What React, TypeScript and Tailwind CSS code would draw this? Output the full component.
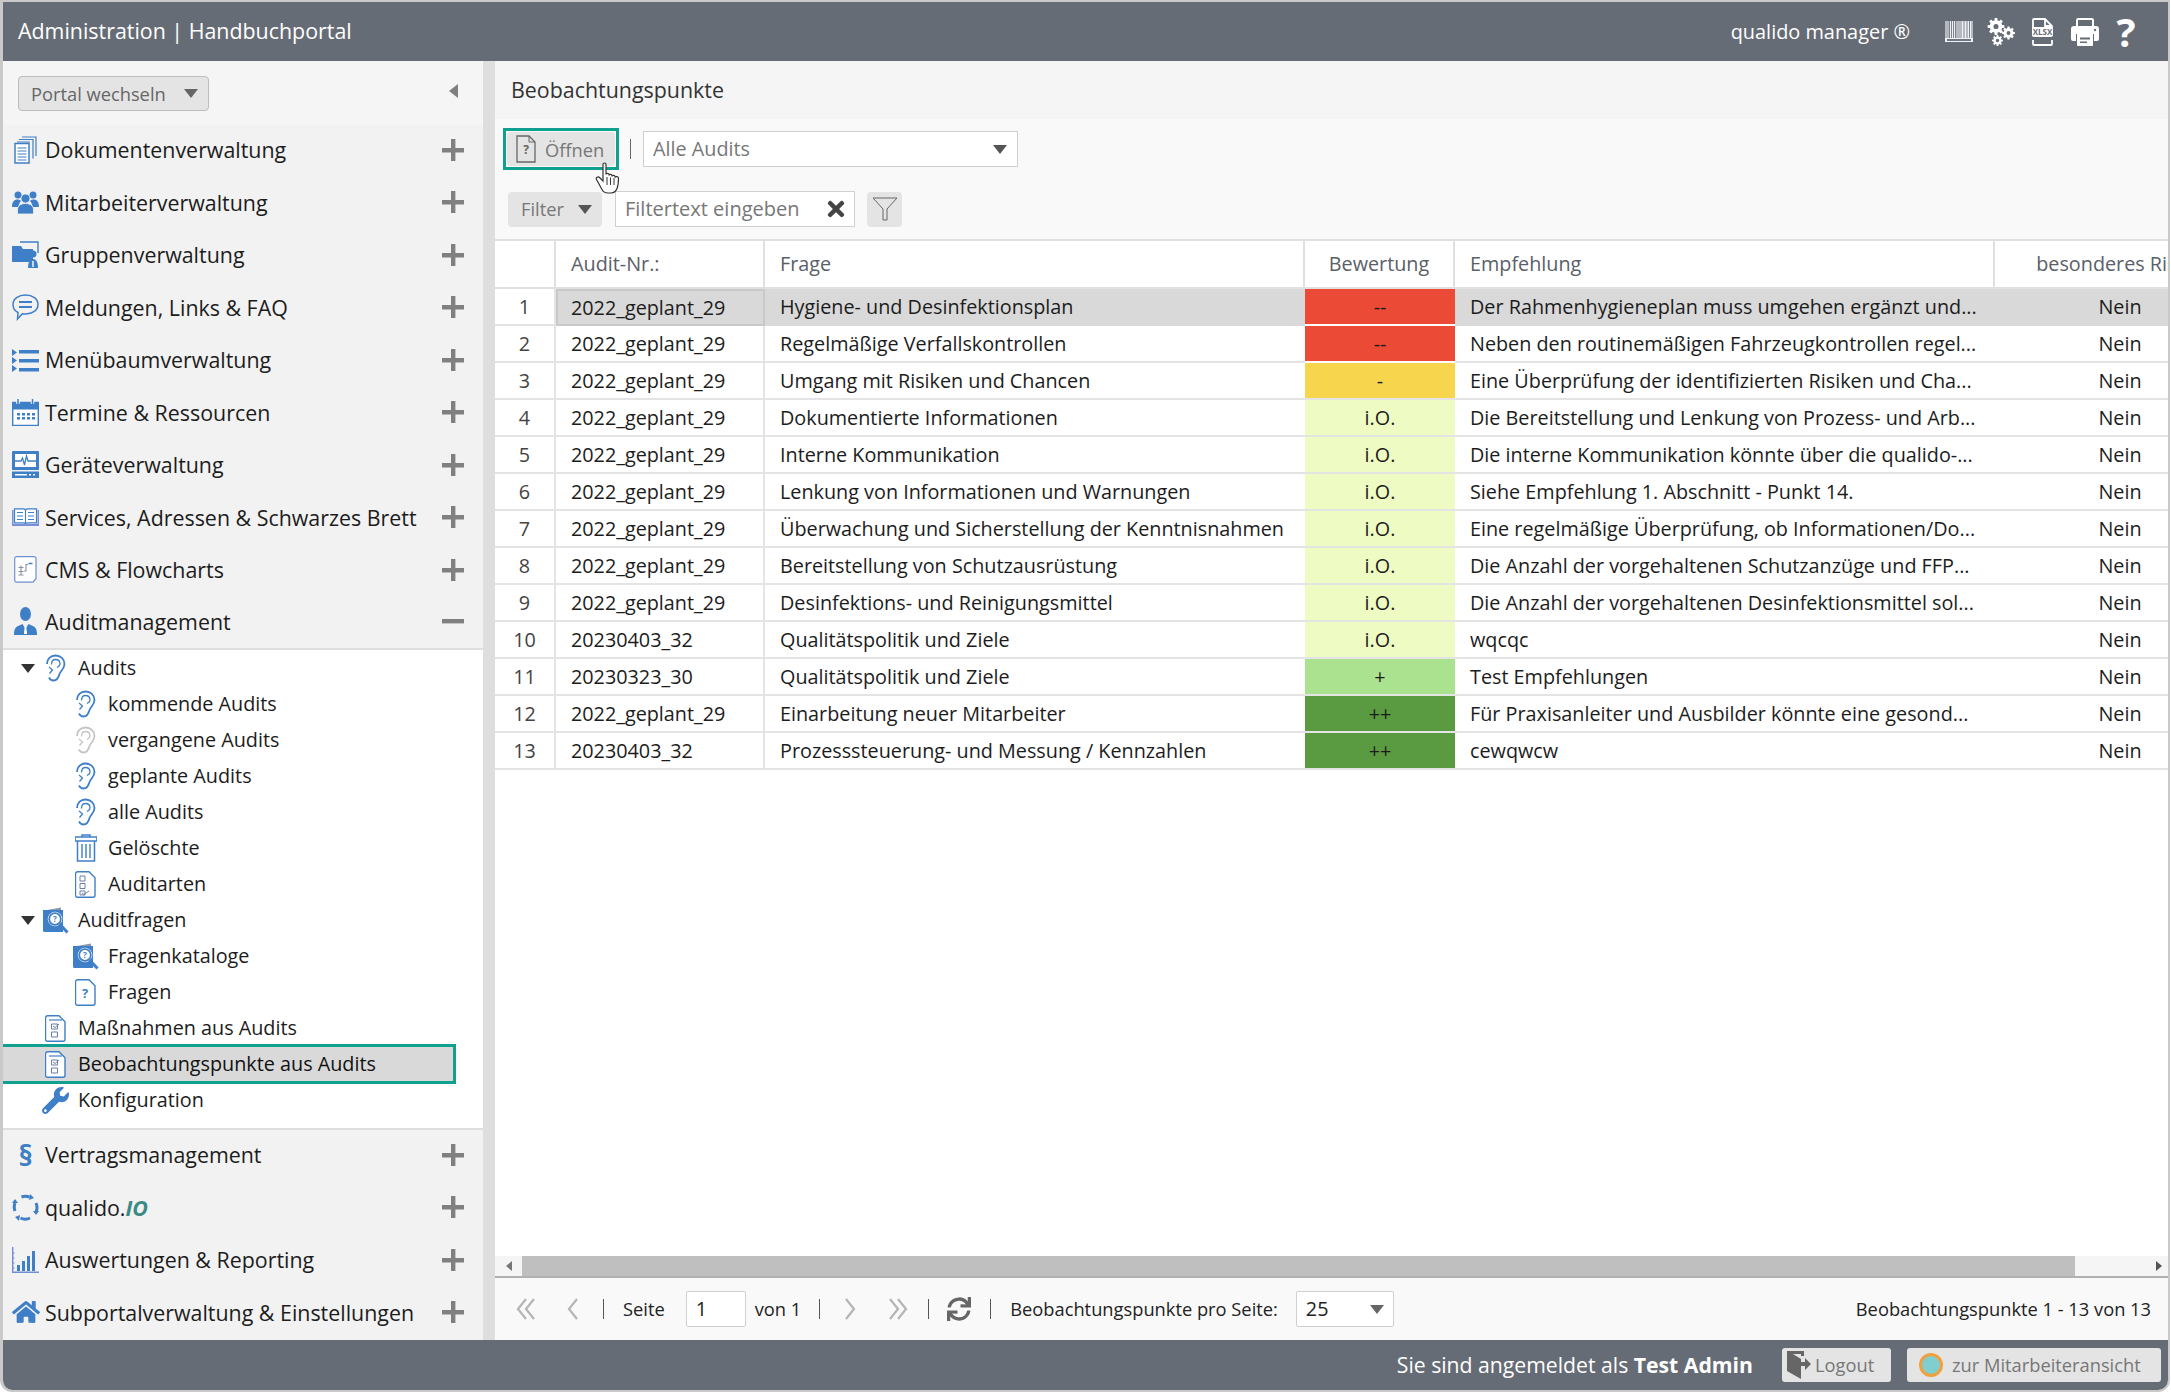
import React from "react";
import { FaHome, FaWrench, FaSync, FaTimes } from "react-icons/fa";

const BLUE = "#3f7fc7";

const Svg = ({ w, h, vb, children, className = "" }: { w: number; h: number; vb: string; children: React.ReactNode; className?: string }) => (
  <svg width={w} height={h} viewBox={vb} className={"shrink-0 " + className} fill="none">{children}</svg>
);

const Caret = ({ w = 14, h = 9, c = "#333" }: { w?: number; h?: number; c?: string }) => (
  <Svg w={w} h={h} vb="0 0 14 9"><path d="M0 0H14L7 9Z" fill={c} /></Svg>
);

const PlusIcon = () => (
  <Svg w={22} h={22} vb="0 0 22 22"><path d="M9 0h4.400v9H22v4.400h-8.600V22H9v-8.600H0V9h9Z" fill="#808080" /></Svg>
);
const MinusIcon = () => (
  <Svg w={22} h={22} vb="0 0 22 22"><rect y="9" width="22" height="4.400" fill="#808080" /></Svg>
);

const Ear = ({ c = BLUE }: { c?: string }) => (
  <Svg w={21} h={28} vb="0 0 21 28">
    <path d="M2 10C2 5 5.500 1.500 10.500 1.500 15.500 1.500 19.500 5 19.500 10 19.500 14.500 16 16.500 14.500 20 13.500 24 11.500 26.500 8.500 26.500 6.500 26.500 5 25.500 4 23.500" stroke={c} strokeWidth="1.800" />
    <path d="M6.500 10.500C6.500 7.500 8 5.500 10.500 5.500 13.500 5.500 15 7.500 15 10 15 12 13.500 12.500 12 13.500M4 13l3.500 3-3 3.500" stroke={c} strokeWidth="1.300" />
  </Svg>
);
const DocStack = () => (
  <Svg w={23} h={28} vb="0 0 23 28">
    <path d="M8 1h14v19M5 3.500h14v19M3 6h13" stroke={BLUE} strokeWidth="1.200" />
    <path d="M1 7.500h14v19.500H1Z" fill="#fff" stroke={BLUE} strokeWidth="1.500" />
    <path d="M3.500 12h9M3.500 15h9M3.500 18h9M3.500 21h9M3.500 24h9" stroke={BLUE} strokeWidth="1.200" />
  </Svg>
);
const People = () => (
  <Svg w={27} h={23} vb="0 0 27 23">
    <circle cx="6" cy="4" r="3.500" fill={BLUE} />
    <circle cx="21" cy="4" r="3.500" fill={BLUE} />
    <path d="M0 16c0-5 2-7.500 5.500-7.500 1.500 0 2.500.500 3.500 1.500-1.500 1.500-2.500 3.500-2.500 6Z" fill={BLUE} />
    <path d="M27 16c0-5-2-7.500-5.500-7.500-1.500 0-2.500.500-3.500 1.500 1.500 1.500 2.500 3.500 2.500 6Z" fill={BLUE} />
    <circle cx="13.500" cy="7.500" r="4.500" fill={BLUE} stroke="#f2f2f2" strokeWidth=".8" />
    <path d="M5.500 23v-4c0-4 3-6.500 8-6.500s8 2.500 8 6.500v4Z" fill={BLUE} stroke="#f2f2f2" strokeWidth=".8" />
  </Svg>
);
const FolderPerson = () => (
  <Svg w={27} h={28} vb="0 0 27 28">
    <path d="M0 5h9l2 3h10v13H0Z" fill={BLUE} />
    <path d="M8 1h18v11" stroke={BLUE} strokeWidth="1.400" />
    <circle cx="21" cy="13" r="3.500" fill={BLUE} />
    <path d="M16 27c0-6 2-9 5-9s5 3 5 9Z" fill={BLUE} />
    <path d="M20.300 20h1.400v6h-1.400Z" fill="#fff" />
  </Svg>
);
const Chat = () => (
  <Svg w={27} h={28} vb="0 0 27 28">
    <path d="M13.500 2C20.500 2 26 5.800 26 11.500S20.500 21 13.500 21c-1 0-2 0-3-.300L5.500 26l.500-6.500C3 18 1 15 1 11.500 1 5.800 6.500 2 13.500 2Z" stroke={BLUE} strokeWidth="1.500" />
    <path d="M7 9h13M7 14h13" stroke={BLUE} strokeWidth="1.800" />
  </Svg>
);
const ListIc = () => (
  <Svg w={27} h={24} vb="0 0 27 24">
    <path d="M0 1l5 3.500L0 8ZM0 9l5 3.500L0 16ZM0 17l5 3.500L0 24Z" fill={BLUE} />
    <path d="M7 2h20v3.500H7ZM7 11h20v3.500H7ZM7 20h20v3.500H7Z" fill={BLUE} />
  </Svg>
);
const Cal = () => (
  <Svg w={27} h={27} vb="0 0 27 27">
    <path d="M.7 3.500h25.600v23H.7Z" fill="#fff" stroke={BLUE} strokeWidth="1.400" />
    <path d="M0 3h27v7.500H0Z" fill={BLUE} />
    <path d="M6 0v5M20.500 0v5" stroke="#fff" strokeWidth="3.400" />
    <path d="M6 0v5M20.500 0v5" stroke={BLUE} strokeWidth="1.600" />
    <path d="M5 14h3v2.500H5ZM10 14h3v2.500h-3ZM15 14h3v2.500h-3ZM20 14h3v2.500h-3ZM5 18h3v2.500H5ZM10 18h3v2.500h-3ZM15 18h3v2.500h-3ZM20 18h3v2.500h-3Z" fill={BLUE} />
  </Svg>
);
const Monitor = () => (
  <Svg w={27} h={27} vb="0 0 27 27">
    <path d="M0 1a1 1 0 011-1h25a1 1 0 011 1v18H0Z" fill={BLUE} />
    <path d="M3 3h21v13H3Z" fill="#fff" />
    <path d="M3 10h6l1.500-3 2 7 2-9 1.500 5h8" stroke={BLUE} strokeWidth="1.300" />
    <path d="M0 20.500h27V27H0Z" fill={BLUE} />
    <path d="M3 23h12v1.500H3ZM17 23h2v1.500h-2ZM21 23h2v1.500h-2Z" fill="#fff" />
  </Svg>
);
const Book = () => (
  <Svg w={27} h={18} vb="0 0 27 18">
    <path d="M0 2h1.500v14H13l.5 1 .5-1h11.500V2H27v16H0Z" fill="#7c8fd6" />
    <path d="M2.500 .8h9c1 0 1.500.5 2 1.200.500-.700 1-1.200 2-1.200h9v14h-9.500l-1.500 1-1.500-1H2.500Z" fill="#fff" stroke={BLUE} strokeWidth="1.200" />
    <path d="M13.500 2v13M5 4.500h6M5 8h6M5 11.500h6M16 4.500h6M16 8h6M16 11.500h6" stroke={BLUE} strokeWidth="1.100" />
  </Svg>
);
const FlowDoc = () => (
  <Svg w={23} h={27} vb="0 0 23 27">
    <path d="M2.500.7h17.500a2 2 0 012 2v20l-3 3.500H2.500a2 2 0 01-1.800-2V2.500A2 2 0 012.500.7Z" fill="#fff" stroke="#6f8ed4" strokeWidth="1.200" />
    <path d="M4.500 11.500h5M4.500 15.500h5M4.500 19h5M7 9.500v9M10 15h2V8.500h2" stroke="#8a8fa8" strokeWidth="1.100" />
    <path d="M14.500 7.500h4" stroke={BLUE} strokeWidth="1.500" />
  </Svg>
);
const Suit = () => (
  <Svg w={23} h={28} vb="0 0 23 28">
    <ellipse cx="11.500" cy="7" rx="5.500" ry="7" fill={BLUE} />
    <path d="M0 28c0-4 .5-7 3-8.500l5.500-2.500 3 5 3-5 5.500 2.500c2.500 1.500 3 4.500 3 8.500Z" fill={BLUE} />
    <path d="M10.700 20h1.600l.8 7h-3.200Z" fill="#fff" />
  </Svg>
);
const CheckDoc = ({ variant }: { variant: "a" | "b" | "c" }) => (
  <Svg w={21} h={27} vb="0 0 21 27" >
    <path d="M2.500.8h11.500l6 6v17.500a2 2 0 01-2 2H2.500a2 2 0 01-2-2V2.800a2 2 0 012-2Z" fill="#fff" stroke={BLUE} strokeWidth="1.400" />
    {variant === "a" && (
      <>
        <path d="M5 5h5v5H5ZM5 12.500h5v5H5ZM5 20h5v4H5Z" stroke="#6b7fa8" strokeWidth="1" />
        <path d="M7 22l2 1.500 5-3.500" stroke="#6b7fa8" strokeWidth="1" />
      </>
    )}
    {variant === "b" && (
      <>
        <path d="M4 5h13" stroke={BLUE} strokeWidth="1.200" />
        <path d="M6.500 9h6v5h-6ZM6.500 17h6v5h-6Z" stroke="#6b7fa8" strokeWidth="1" />
        <path d="M8 11l2 1.500 4-3.500" stroke="#6b7fa8" strokeWidth="1" />
      </>
    )}
    {variant === "c" && <text x="10" y="19" textAnchor="middle" fontSize="13" fontWeight="700" fill={BLUE} fontFamily="Open Sans">?</text>}
  </Svg>
);
const Trash = () => (
  <Svg w={22} h={28} vb="0 0 22 28">
    <path d="M7 3V1h8v2" stroke={BLUE} strokeWidth="1.500" />
    <path d="M0 3h22v4H0Z" stroke={BLUE} strokeWidth="1.600" />
    <path d="M2.500 7v20h17V7" stroke={BLUE} strokeWidth="1.500" />
    <path d="M7 10v14M11 10v14M15 10v14" stroke={BLUE} strokeWidth="1.400" />
  </Svg>
);
const BookSearch = () => (
  <Svg w={26} h={27} vb="0 0 26 27">
    <path d="M1 3.500 18 .5V3H1Z" fill="#8d97b4" />
    <path d="M0 3h20v22H1.500A1.500 1.500 0 010 23.500Z" fill={BLUE} />
    <circle cx="12" cy="12" r="6.800" fill="#fff" stroke="#fff" />
    <circle cx="12" cy="12" r="5.800" stroke={BLUE} strokeWidth="1.800" />
    <path d="M16.500 17l8 8.500" stroke={BLUE} strokeWidth="3" />
    <text x="12" y="15" textAnchor="middle" fontSize="8" fontWeight="700" fill={BLUE} fontFamily="Open Sans">?</text>
  </Svg>
);
const Cycle = () => (
  <Svg w={27} h={27} vb="0 0 27 27">
    <path d="M3 17A11 11 0 013 9M9.500 3A11 11 0 0117.500 3M24 9a11 11 0 010 9M18 24a11 11 0 01-9.500 0" stroke={BLUE} strokeWidth="3" />
    <path d="M0 9h6L3 5ZM18 0l-1 6 5-2ZM27 17h-6l3 4ZM7 27l1-6-5 2Z" fill={BLUE} />
  </Svg>
);
const Bars = () => (
  <Svg w={27} h={26} vb="0 0 27 26">
    <path d="M.7 0v25.300H27" stroke="#6f8ed4" strokeWidth="1.400" />
    <path d="M0 6h2.500M0 11h2.500M0 16h2.500M0 21h2.500" stroke="#6f8ed4" strokeWidth="1" />
    <path d="M5 18h3v6H5ZM10 14h3v10h-3ZM15 9h3v15h-3ZM20 4h3v20h-3Z" fill={BLUE} />
  </Svg>
);
const Barcode = () => (
  <Svg w={28} h={21} vb="0 0 28 21">
    <path d="M0 0h28v21H0Z" fill="#eef1f5" />
    <path d="M1 0v17M3 0v17M4.500 0v17M6.500 0v17M8.500 0v17M10.500 0v17M12 0v17M14 0v17M16 0v17M19 0v17M22 0v17M24.500 0v17M27 0v17" stroke="#70767f" strokeWidth=".9" />
    <path d="M2 18h24v2H2Z" fill="#70767f" />
  </Svg>
);
const gearPath = (cx: number, cy: number, r: number, teeth: number) => {
  const inner = r * 0.74;
  const step = (Math.PI * 2) / teeth;
  let d = "";
  for (let i = 0; i < teeth; i++) {
    const a = i * step;
    const pts: [number, number][] = [
      [inner, a - step * 0.32],
      [r, a - step * 0.2],
      [r, a + step * 0.2],
      [inner, a + step * 0.32],
    ];
    for (const [rad, ang] of pts) {
      d += (d ? "L" : "M") + (cx + rad * Math.cos(ang)).toFixed(2) + " " + (cy + rad * Math.sin(ang)).toFixed(2);
    }
  }
  return d + "Z";
};
const Gear = ({ cx, cy, r, teeth }: { cx: number; cy: number; r: number; teeth: number }) => (
  <>
    <path d={gearPath(cx, cy, r, teeth)} fill="#fff" />
    <circle cx={cx} cy={cy} r={r * 0.3} fill="#666c75" />
  </>
);
const Gears = () => (
  <Svg w={28} h={28} vb="0 0 28 28">
    <Gear cx={9} cy={8.500} r={8.500} teeth={8} />
    <Gear cx={21.500} cy={15} r={6.500} teeth={8} />
    <Gear cx={10.500} cy={22.500} r={5.500} teeth={8} />
  </Svg>
);
const Printer = () => (
  <Svg w={28} h={28} vb="0 0 28 28">
    <path d="M6 9V2.200A1.200 1.200 0 017.200 1h13.600A1.200 1.200 0 0122 2.200V9" stroke="#fff" strokeWidth="2" />
    <path d="M3 8h22a3 3 0 013 3v10a2 2 0 01-2 2h-3V16H5v7H2a2 2 0 01-2-2V11a3 3 0 013-3Z" fill="#fff" />
    <path d="M6 16h16v11a1 1 0 01-1 1H7a1 1 0 01-1-1Z" fill="#fff" />
    <path d="M9 19.500h10v2H9ZM9 23.500h7v1.500H9Z" fill="#666c75" />
    <circle cx="24" cy="12" r="1.200" fill="#666c75" />
  </Svg>
);
const XlsxIc = () => (
  <span className="relative flex h-[28px] w-[25px] shrink-0 items-center justify-center">
    <Svg w={21} h={28} vb="0 0 21 28" className="absolute left-[2px] top-0">
      <path d="M1 18V2a1 1 0 011-1h11l7 7v10M1 22v4a1 1 0 001 1h17a1 1 0 001-1v-4M13 1v7h7" stroke="#fff" strokeWidth="1.800" />
    </Svg>
    <span className="relative z-10 rounded-[2px] bg-white px-[1px] text-[8px] font-bold leading-[10px] text-[#666c75]">XLSX</span>
  </span>
);
const DoorOut = () => (
  <Svg w={25} h={28} vb="0 0 25 28">
    <path d="M0 0h17v5h-3V3H6l8 5v20L0 20Z" fill="#666" />
    <path d="M14 11h4V7l6 6-6 6v-4h-4Z" fill="#666" />
  </Svg>
);

const Sec = () => <span className="flex h-[28px] w-[27px] items-center justify-center text-[29px] font-bold leading-none text-[#3f7fc7]">§</span>;

type Acc = { icon: React.ReactNode; label: React.ReactNode; open?: boolean };

const top: Acc[] = [
  { icon: <DocStack />, label: "Dokumentenverwaltung" },
  { icon: <People />, label: "Mitarbeiterverwaltung" },
  { icon: <FolderPerson />, label: "Gruppenverwaltung" },
  { icon: <Chat />, label: "Meldungen, Links & FAQ" },
  { icon: <ListIc />, label: "Menübaumverwaltung" },
  { icon: <Cal />, label: "Termine & Ressourcen" },
  { icon: <Monitor />, label: "Geräteverwaltung" },
  { icon: <Book />, label: "Services, Adressen & Schwarzes Brett" },
  { icon: <FlowDoc />, label: "CMS & Flowcharts" },
  { icon: <Suit />, label: "Auditmanagement", open: true },
];
const bottom: Acc[] = [
  { icon: <Sec />, label: "Vertragsmanagement" },
  { icon: <Cycle />, label: <>qualido.<span className="font-bold italic text-[#3b8a84]">IO</span></> },
  { icon: <Bars />, label: "Auswertungen & Reporting" },
  { icon: <FaHome size={28} color={BLUE} />, label: "Subportalverwaltung & Einstellungen" },
];

const AccRow = ({ a }: { a: Acc }) => (
  <div className={"box-border flex h-[52.5px] shrink-0 items-center bg-[#f2f2f2] pb-[3px] pr-[19px] " + (a.open ? "border-b-2 border-[#dedede]" : "")}>
    <span className="flex w-[42px] shrink-0 items-center justify-center pl-[3px]">{a.icon}</span>
    <span className="flex-1 whitespace-nowrap text-[21.4px] leading-none text-[#1c1c1c]">{a.label}</span>
    {a.open ? <MinusIcon /> : <PlusIcon />}
  </div>
);

const TreeRow = ({ level, caret, icon, label }: { level: 1 | 2; caret?: boolean; icon: React.ReactNode; label: string }) => (
  <div className="flex h-[36px] shrink-0 items-center">
    <span className="flex w-[42px] shrink-0 items-center justify-center pl-[8px]">{caret && <Caret />}</span>
    {level === 2 && <span className="w-[30px] shrink-0" />}
    <span className="-ml-[3px] flex w-[27px] shrink-0 items-center justify-center">{icon}</span>
    <span className="ml-[9px] whitespace-nowrap text-[19.8px] text-[#1c1c1c]">{label}</span>
  </div>
);

const Sidebar = () => (
  <aside className="flex w-[480px] shrink-0 flex-col bg-[#f5f5f5]">
    <div className="flex h-[64px] shrink-0 items-start justify-between pl-[15px] pr-[25px] pt-[15px]">
      <div className="flex h-[35px] w-[191px] items-center justify-between rounded-[4px] border border-[#bdbdbd] bg-[#e4e4e4] pl-[12px] pr-[10px] text-[18.3px] text-[#666]">
        Portal wechseln <Caret c="#666" />
      </div>
      <Svg w={9} h={14} vb="0 0 9 14" className="mt-[8px]"><path d="M9 0v14L0 7Z" fill="#808080" /></Svg>
    </div>
    {top.map((a, i) => <AccRow key={i} a={a} />)}
    <div className="flex h-[478px] shrink-0 flex-col bg-white">
      <TreeRow level={1} caret icon={<Ear />} label="Audits" />
      <TreeRow level={2} icon={<Ear />} label="kommende Audits" />
      <TreeRow level={2} icon={<Ear c="#c4c4c4" />} label="vergangene Audits" />
      <TreeRow level={2} icon={<Ear />} label="geplante Audits" />
      <TreeRow level={2} icon={<Ear />} label="alle Audits" />
      <TreeRow level={2} icon={<Trash />} label="Gelöschte" />
      <TreeRow level={2} icon={<CheckDoc variant="a" />} label="Auditarten" />
      <TreeRow level={1} caret icon={<BookSearch />} label="Auditfragen" />
      <TreeRow level={2} icon={<BookSearch />} label="Fragenkataloge" />
      <TreeRow level={2} icon={<CheckDoc variant="c" />} label="Fragen" />
      <TreeRow level={1} icon={<CheckDoc variant="b" />} label="Maßnahmen aus Audits" />
      <div className="relative z-10 -mb-[2px] -ml-[3px] -mt-[2px] box-border flex h-[40px] w-[456px] shrink-0 items-center border-[3px] border-[#10a08f] bg-[#d9d9d9] pl-[39px]">
        <span className="flex w-[27px] shrink-0 items-center justify-center"><CheckDoc variant="b" /></span>
        <span className="ml-[9px] whitespace-nowrap text-[19.8px] text-[#111]">Beobachtungspunkte aus Audits</span>
      </div>
      <TreeRow level={1} icon={<FaWrench size={27} color={BLUE} />} label="Konfiguration" />
    </div>
    <div className="shrink-0 border-t-2 border-[#dedede]">
      {bottom.map((a, i) => <AccRow key={i} a={a} />)}
    </div>
  </aside>
);

const rows: [string, string, string, string][] = [
  ["2022_geplant_29", "Hygiene- und Desinfektionsplan", "--", "Der Rahmenhygieneplan muss umgehen ergänzt und..."],
  ["2022_geplant_29", "Regelmäßige Verfallskontrollen", "--", "Neben den routinemäßigen Fahrzeugkontrollen regel..."],
  ["2022_geplant_29", "Umgang mit Risiken und Chancen", "-", "Eine Überprüfung der identifizierten Risiken und Cha..."],
  ["2022_geplant_29", "Dokumentierte Informationen", "i.O.", "Die Bereitstellung und Lenkung von Prozess- und Arb..."],
  ["2022_geplant_29", "Interne Kommunikation", "i.O.", "Die interne Kommunikation könnte über die qualido-..."],
  ["2022_geplant_29", "Lenkung von Informationen und Warnungen", "i.O.", "Siehe Empfehlung 1. Abschnitt - Punkt 14."],
  ["2022_geplant_29", "Überwachung und Sicherstellung der Kenntnisnahmen", "i.O.", "Eine regelmäßige Überprüfung, ob Informationen/Do..."],
  ["2022_geplant_29", "Bereitstellung von Schutzausrüstung", "i.O.", "Die Anzahl der vorgehaltenen Schutzanzüge und FFP..."],
  ["2022_geplant_29", "Desinfektions- und Reinigungsmittel", "i.O.", "Die Anzahl der vorgehaltenen Desinfektionsmittel sol..."],
  ["20230403_32", "Qualitätspolitik und Ziele", "i.O.", "wqcqc"],
  ["20230323_30", "Qualitätspolitik und Ziele", "+", "Test Empfehlungen"],
  ["2022_geplant_29", "Einarbeitung neuer Mitarbeiter", "++", "Für Praxisanleiter und Ausbilder könnte eine gesond..."],
  ["20230403_32", "Prozesssteuerung- und Messung / Kennzahlen", "++", "cewqwcw"],
];
const rating: Record<string, string> = {
  "--": "bg-[#eb4a36] border-white",
  "-": "bg-[#f7d64e] border-[#e4e4e4]",
  "i.O.": "bg-[#eefbc2] border-[#e4e4e4]",
  "+": "bg-[#abe290] border-[#e4e4e4]",
  "++": "bg-[#5a9a41] border-[#e4e4e4]",
};
const th = "border-r-2 border-t-2 border-b-2 border-[#e0e0e0] font-normal text-[#5a6068] text-[19.8px]";

const DataTable = () => (
  <div className="min-h-0 flex-1 overflow-hidden bg-white">
    <table className="w-[1750px] table-fixed border-separate border-spacing-0 text-[19.8px] text-[#1c1c1c]">
      <colgroup>
        <col className="w-[61px]" />
        <col className="w-[209px]" />
        <col className="w-[540px]" />
        <col className="w-[150px]" />
        <col className="w-[540px]" />
        <col className="w-[250px]" />
      </colgroup>
      <thead>
        <tr className="h-[50px]">
          <th className={th}></th>
          <th className={th + " pl-[15px] text-left"}>Audit-Nr.:</th>
          <th className={th + " pl-[15px] text-left"}>Frage</th>
          <th className={th + " text-center"}>Bewertung</th>
          <th className={th + " pl-[15px] text-left"}>Empfehlung</th>
          <th className="border-b-2 border-t-2 border-[#e0e0e0] text-center text-[19.8px] font-normal text-[#5a6068]">besonderes Risiko</th>
        </tr>
      </thead>
      <tbody>
        {rows.map((r, i) => {
          const sel = i === 0;
          const bg = sel ? "bg-[#d9d9d9]" : "";
          return (
            <tr key={i} className="h-[37px]">
              <td className="border-b-2 border-r-2 border-[#e4e4e4] bg-white text-center text-[#444]">{i + 1}</td>
              <td className={"whitespace-nowrap " + (sel ? "border-2 border-[#c9c9c9] bg-[#d9d9d9] pl-[13px]" : "border-b-2 border-r-2 border-[#e4e4e4] pl-[15px]")}>{r[0]}</td>
              <td className={"whitespace-nowrap border-b-2 pl-[15px] " + bg + (sel ? " border-[#d9d9d9]" : " border-[#e4e4e4]")}>{r[1]}</td>
              <td className={"border-b-2 text-center " + rating[r[2]]}>{r[2]}</td>
              <td className={"whitespace-nowrap border-b-2 pl-[15px] " + bg + (sel ? " border-[#d9d9d9]" : " border-[#e4e4e4]")}>{r[3]}</td>
              <td className={"whitespace-nowrap border-b-2 text-center " + bg + (sel ? " border-[#d9d9d9]" : " border-[#e4e4e4]")}>Nein</td>
            </tr>
          );
        })}
      </tbody>
    </table>
  </div>
);

const Sep = () => <span className="block h-[20px] w-px shrink-0 bg-[#555]" />;
const Chev = ({ d }: { d: string }) => (
  <Svg w={16} h={22} vb="0 0 16 22"><path d={d} stroke="#b5b5b5" strokeWidth="2.200" /></Svg>
);
const Chev2 = ({ d }: { d: string }) => (
  <Svg w={22} h={22} vb="0 0 22 22"><path d={d} stroke="#b5b5b5" strokeWidth="2.200" /></Svg>
);

const Pager = () => (
  <div className="flex h-[62px] shrink-0 items-center bg-[#f9f9f9] pr-[17px] text-[18.3px] text-[#222]">
    <span className="ml-[20px]"><Chev2 d="M11 1L3 11l8 10M19 1l-8 10 8 10" /></span>
    <span className="ml-[28px]"><Chev d="M12 1L4 11l8 10" /></span>
    <span className="ml-[22px]"><Sep /></span>
    <span className="ml-[19px]">Seite</span>
    <span className="ml-[21px] flex h-[36px] w-[60px] items-center rounded-[2px] border border-[#d0d0d0] bg-white pl-[9px] text-[19.8px]">1</span>
    <span className="ml-[9px]">von 1</span>
    <span className="ml-[18px]"><Sep /></span>
    <span className="ml-[22px]"><Chev d="M4 1l8 10-8 10" /></span>
    <span className="ml-[29px]"><Chev2 d="M3 1l8 10-8 10M11 1l8 10-8 10" /></span>
    <span className="ml-[19px]"><Sep /></span>
    <span className="ml-[18px]"><FaSync size={24} color="#666" /></span>
    <span className="ml-[19px]"><Sep /></span>
    <span className="ml-[19px]">Beobachtungspunkte pro Seite:</span>
    <span className="ml-[18px] flex h-[36px] w-[98px] items-center justify-between rounded-[2px] border border-[#d0d0d0] bg-white px-[9px] text-[19.8px]">25 <Caret c="#666" /></span>
    <span className="ml-auto">Beobachtungspunkte 1 - 13 von 13</span>
  </div>
);

const Hand = () => (
  <Svg w={26} h={32} vb="0 0 26 32">
    <path d="M8 2.500c0-2 3-2 3 0v10c0-1.500 3-1.500 3 0v1c0-1.500 3-1.500 3 0v1c0-1.500 3-1.500 3 0v1c.500-1.500 3.500-1 3.500.500 0 5-.500 8-1.500 10.500-1 2.500-3 4.500-6 4.500h-3c-3 0-5-1.500-6-3.500L1.500 17.500c-1-2 1.500-3.500 3-2L8 19Z" fill="#fff" stroke="#333" strokeWidth="1.200" />
    <path d="M12 15v8M15.500 15.500v7.500M19 16v7" stroke="#333" strokeWidth="1" />
  </Svg>
);

const Toolbar = () => (
  <div className="relative flex h-[120px] shrink-0 flex-col bg-[#f9f9f9]">
    <div className="ml-[8px] mt-[9px] flex items-center">
      <div className="box-border flex h-[42px] w-[116px] items-center border-[3px] border-[#10a08f] p-px">
        <div className="flex h-full w-full items-center rounded-[4px] bg-[#e4e4e4] pl-[9px] text-[18.3px] text-[#777]">
          <Svg w={20} h={28} vb="0 0 20 28"><path d="M1 1h12l6 6v20H1Z" stroke="#666" strokeWidth="1.300" /><path d="M13 1v6h6" stroke="#666" strokeWidth="1" /><text x="10" y="19" textAnchor="middle" fontSize="12" fontWeight="700" fill="#666" fontFamily="Open Sans">?</text></Svg>
          <span className="ml-[9px] mt-[1px]">Öffnen</span>
        </div>
      </div>
      <span className="ml-[11px]"><span className="block h-[20px] w-px bg-[#666]" /></span>
      <div className="ml-[12px] flex h-[36px] w-[375px] items-center justify-between border border-[#cfcfcf] bg-white pl-[9px] pr-[10px] text-[19.8px] text-[#777]">
        Alle Audits <Caret c="#555" />
      </div>
    </div>
    <div className="ml-[13px] mt-[21px] flex items-center">
      <div className="flex h-[35px] w-[94px] items-center justify-between rounded-[4px] bg-[#e4e4e4] pl-[13px] pr-[10px] text-[18.3px] text-[#777]">
        Filter <Caret c="#555" />
      </div>
      <div className="ml-[13px] flex h-[36px] w-[240px] items-center justify-between border border-[#d0d0d0] bg-white pl-[9px] pr-[6px] text-[20px] text-[#777]">
        Filtertext eingeben <FaTimes size={24} color="#444" />
      </div>
      <div className="ml-[12px] flex h-[35px] w-[35px] items-center justify-center rounded-[4px] bg-[#e4e4e4]">
        <Svg w={26} h={26} vb="0 0 26 26"><path d="M1 2h24L15 13v11h-4V13Z" stroke="#666" strokeWidth="1" /></Svg>
      </div>
    </div>
    <span className="absolute left-[100px] top-[43px] z-20"><Hand /></span>
  </div>
);

export default function App() {
  return (
    <div className="box-border flex h-[1392px] w-[2170px] flex-col overflow-hidden rounded-b-[12px] border-y-2 border-l-[3px] border-r-2 border-[#c9c9c9] bg-white font-['Open_Sans',sans-serif]">
      <header className="flex h-[59px] shrink-0 items-center bg-[#666c75] pl-[15px] pr-[32px] text-white">
        <span className="text-[21.4px]">Administration | Handbuchportal</span>
        <span className="ml-auto text-[19.9px]">qualido manager ®</span>
        <span className="ml-[35px]"><Barcode /></span>
        <span className="ml-[14px]"><Gears /></span>
        <span className="ml-[15px]"><XlsxIc /></span>
        <span className="ml-[16px]"><Printer /></span>
        <span className="ml-[17px] w-[20px] text-center text-[40px] font-bold leading-none">?</span>
      </header>
      <div className="flex min-h-0 flex-1">
        <Sidebar />
        <div className="w-[12px] shrink-0 bg-[#dedede]" />
        <main className="flex min-w-0 flex-1 flex-col">
          <div className="flex h-[58px] shrink-0 items-center bg-[#f5f5f5] pl-[16px] text-[21.4px] text-[#333]">Beobachtungspunkte</div>
          <Toolbar />
          <DataTable />
          <div className="flex h-[22px] shrink-0 items-stretch border-b-2 border-[#b0b0b0] bg-[#f5f5f5]">
            <span className="flex w-[27px] items-center justify-center"><Svg w={6} h={10} vb="0 0 6 10"><path d="M6 0v10L0 5Z" fill="#777" /></Svg></span>
            <span className="flex-1 bg-[#bfbfbf]" />
            <span className="flex w-[93px] items-center justify-end pr-[6px]"><Svg w={6} h={10} vb="0 0 6 10"><path d="M0 0v10l6-5Z" fill="#555" /></Svg></span>
          </div>
          <Pager />
        </main>
      </div>
      <footer className="flex h-[50px] shrink-0 items-center bg-[#666c75] pr-[7px] text-white">
        <span className="ml-auto text-[21.2px]">Sie sind angemeldet als <b className="font-bold">Test Admin</b></span>
        <span className="ml-[29px] flex h-[34px] w-[109px] items-center rounded-[3px] bg-[#e4e4e4] pl-[5px] text-[18.3px] text-[#777]">
          <DoorOut /><span className="ml-[3px]">Logout</span>
        </span>
        <span className="ml-[16px] flex h-[34px] w-[254px] items-center rounded-[3px] bg-[#e4e4e4] pl-[12px] text-[18.3px] text-[#777]">
          <span className="h-[24px] w-[24px] rounded-full border-[3px] border-[#f0a03c] bg-[#7fcfd0]" />
          <span className="ml-[9px]">zur Mitarbeiteransicht</span>
        </span>
      </footer>
    </div>
  );
}
